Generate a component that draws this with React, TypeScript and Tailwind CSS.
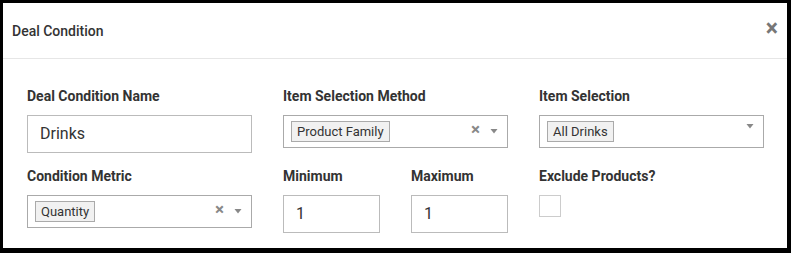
const font = { fontFamily: "Roboto, 'Liberation Sans', sans-serif" };

function Label({ children }: { children: string }) {
  return <div className="h-[18px] mb-[10px] text-[14px] leading-[18px] font-bold text-[#333]">{children}</div>;
}

function Caret() {
  return (
    <svg width="8" height="6" viewBox="0 0 8 6" className="shrink-0">
      <path d="M0.5 1 L7.5 1 L4 5.5 Z" fill="#888" />
    </svg>
  );
}

function Clear() {
  return <span className="text-[17px] leading-none font-bold text-[#888] mr-[10px] -mt-[2px]">×</span>;
}

function Select({ tag, clearable = true }: { tag: string; clearable?: boolean }) {
  return (
    <div className="w-full h-[33px] border border-[#aaa] bg-white flex items-start pl-[7px] pr-[9px] pt-[5px]">
      <span className="h-[21px] px-[5px] border border-[#aaa] bg-[#f1f1f1] text-[13px] leading-[19px] text-[#333]">
        {tag}
      </span>
      <div className="ml-auto flex items-center pt-[2px]">
        {clearable && <Clear />}
        <Caret />
      </div>
    </div>
  );
}

function TextInput({ value }: { value: string }) {
  return (
    <div className="w-full h-[38px] border border-[#bbb] bg-white flex items-center px-[12px] text-[16px] text-[#333]">
      {value}
    </div>
  );
}

export default function App() {
  return (
    <div className="w-[791px] h-[253px] bg-black pt-[3px] pl-[3px]" style={font}>
      <div className="w-[784px] h-[245px] bg-white">
        <div className="h-[56px] border-b border-[#e6e6e6] flex items-center justify-between pl-[9px] pr-[9px]">
          <span className="text-[14px] font-medium text-[#333] mt-[2px]">Deal Condition</span>
          <span className="text-[23px] leading-none font-bold text-[#777] -mt-[4px]">×</span>
        </div>
        <div className="pl-6 pr-[23px] pt-[28px] grid grid-cols-3 gap-x-[31px] gap-y-[14px]">
          <div>
            <Label>Deal Condition Name</Label>
            <TextInput value="Drinks" />
          </div>
          <div>
            <Label>Item Selection Method</Label>
            <Select tag="Product Family" />
          </div>
          <div>
            <Label>Item Selection</Label>
            <Select tag="All Drinks" clearable={false} />
          </div>
          <div>
            <Label>Condition Metric</Label>
            <Select tag="Quantity" />
          </div>
          <div className="grid grid-cols-2 gap-x-[31px]">
            <div>
              <Label>Minimum</Label>
              <TextInput value="1" />
            </div>
            <div>
              <Label>Maximum</Label>
              <TextInput value="1" />
            </div>
          </div>
          <div>
            <Label>Exclude Products?</Label>
            <div className="w-[22px] h-[22px] border border-[#ccc] bg-white" />
          </div>
        </div>
      </div>
    </div>
  );
}
